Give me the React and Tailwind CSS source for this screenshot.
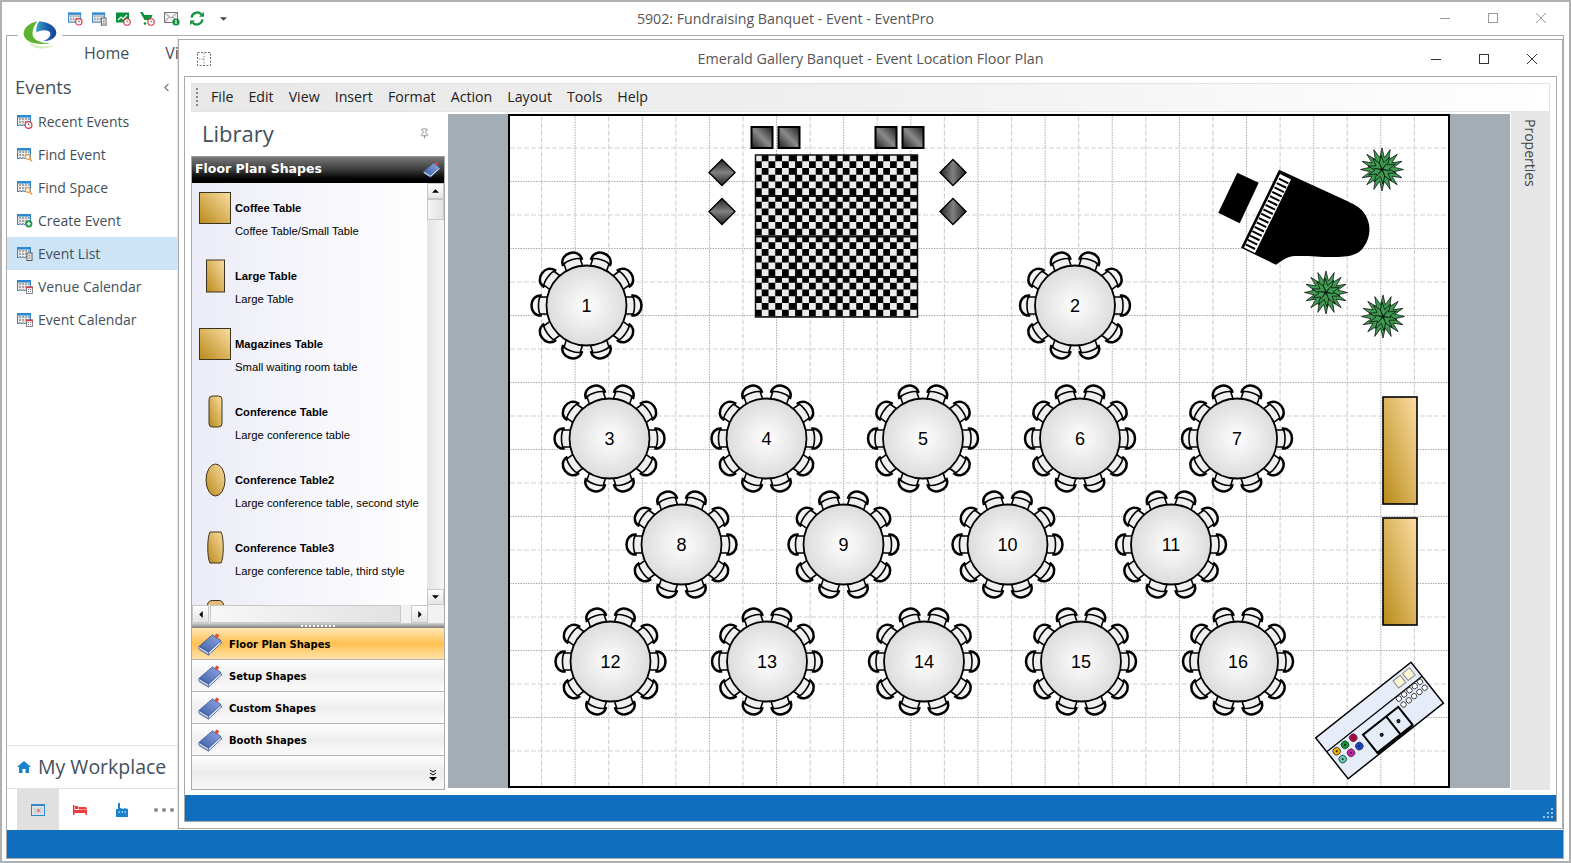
import { useId } from "react";
import { ChevronLeft, Pin } from "lucide-react";

const UI_FONT = "font-['Open_Sans',sans-serif]";

const SIDE_ITEMS = [
  { label: "Recent Events", badge: "clock" },
  { label: "Find Event", badge: "search" },
  { label: "Find Space", badge: "search" },
  { label: "Create Event", badge: "plus" },
  { label: "Event List", badge: "doc", active: true },
  { label: "Venue Calendar", badge: "cal" },
  { label: "Event Calendar", badge: "cal" },
];

const MENU = ["File", "Edit", "View", "Insert", "Format", "Action", "Layout", "Tools", "Help"];

const SHAPES = [
  { title: "Coffee Table", desc: "Coffee Table/Small Table", kind: "square" },
  { title: "Large Table", desc: "Large Table", kind: "tall" },
  { title: "Magazines Table", desc: "Small waiting room table", kind: "square" },
  { title: "Conference Table", desc: "Large conference table", kind: "round" },
  { title: "Conference Table2", desc: "Large conference table, second style", kind: "oval" },
  { title: "Conference Table3", desc: "Large conference table, third style", kind: "barrel" },
];

const GROUPS = ["Floor Plan Shapes", "Setup Shapes", "Custom Shapes", "Booth Shapes"];

const TABLES = [
  [1, 586.5, 305], [2, 1075, 305],
  [3, 609.5, 438], [4, 766.5, 438], [5, 923, 438], [6, 1080, 438], [7, 1237, 438],
  [8, 681.5, 544], [9, 843.5, 544], [10, 1007.5, 544], [11, 1171, 544],
  [12, 610.5, 661], [13, 767, 661], [14, 924, 661], [15, 1081, 661], [16, 1238, 661],
];

function CalendarIcon({ badge, className = "" }) {
  return (
    <svg viewBox="0 0 16 14" className={className}>
      <rect x="0.5" y="0.5" width="13" height="10" fill="#e8e8e8" stroke="#2b88d0" />
      <rect x="0.5" y="0.5" width="13" height="2" fill="#2b88d0" />
      {[3, 6, 9].map((y) =>
        [2, 5, 8, 11].map((x) => <rect key={`${x}-${y}`} x={x} y={y} width="2" height="2" fill="#a9a9a9" />)
      )}
      {badge === "clock" && (
        <g>
          <circle cx="11.5" cy="10" r="3.4" fill="#fff" stroke="#d9333f" strokeWidth="1.2" />
          <path d="M11.5 8.2V10H13" fill="none" stroke="#444" strokeWidth="0.7" />
        </g>
      )}
      {badge === "search" && (
        <g fill="none" stroke="#ee9a45" strokeWidth="1.2">
          <circle cx="10.8" cy="9" r="2.4" fill="#fff" />
          <path d="M12.6 10.8L15 13.4" strokeWidth="1.5" />
        </g>
      )}
      {badge === "plus" && (
        <g>
          <circle cx="11.8" cy="9.8" r="3.6" fill="#1f9447" />
          <path d="M11.8 7.8v4M9.8 9.8h4" stroke="#fff" strokeWidth="1.2" />
        </g>
      )}
      {badge === "doc" && (
        <g>
          <rect x="10" y="6" width="5" height="7.5" fill="#fff" stroke="#555" />
          <path d="M11.5 8.3h2M11.5 10h2M11.5 11.7h2" stroke="#555" strokeWidth="0.8" />
        </g>
      )}
      {badge === "cal" && (
        <g>
          <rect x="9.5" y="7" width="6" height="6.5" fill="#fff" stroke="#666" strokeWidth="0.8" />
          <rect x="9.2" y="6.6" width="6.6" height="1.6" fill="#e5353f" />
          <path d="M11 9.6h1M13.2 9.6h1M11 11.6h1M13.2 11.6h1" stroke="#777" />
        </g>
      )}
    </svg>
  );
}

function ToolbarIcons() {
  return (
    <div className="flex items-center gap-[9px]">
      <CalendarIcon badge="clock" className="w-[15px] h-[14px]" />
      <CalendarIcon badge="doc" className="w-[15px] h-[14px]" />
      <svg viewBox="0 0 15 14" className="w-[15px] h-[14px]">
        <rect x="0" y="0.5" width="13" height="10" fill="#0d8f3a" />
        <path d="M2 8l3-3 2 2 4-4" fill="none" stroke="#fff" strokeWidth="1.2" />
        <circle cx="11" cy="10" r="3.2" fill="#fff" stroke="#d9333f" strokeWidth="1.1" />
        <path d="M11 8.4V10h1.4" fill="none" stroke="#444" strokeWidth="0.6" />
      </svg>
      <svg viewBox="0 0 15 15" className="w-[15px] h-[15px]">
        <path d="M0 1h2.5l2 3h8l-2 5h-6z" fill="#0d8f3a" />
        <circle cx="5" cy="12.5" r="1.3" fill="#0d8f3a" />
        <circle cx="11" cy="11" r="3.2" fill="#fff" stroke="#d9333f" strokeWidth="1.1" />
        <path d="M11 9.4V11h1.4" fill="none" stroke="#444" strokeWidth="0.6" />
      </svg>
      <svg viewBox="0 0 16 15" className="w-[16px] h-[15px]">
        <rect x="0.5" y="1.5" width="13" height="10" fill="#f3f3f3" stroke="#777" />
        <path d="M0.5 1.5L7 7l6.5-5.5M0.5 11.5L5 6M13.5 11.5L9 6" fill="none" stroke="#777" strokeWidth="0.8" />
        <circle cx="12" cy="11" r="3.6" fill="#11913f" />
        <path d="M12 9v4" stroke="#fff" strokeWidth="1.2" />
      </svg>
      <svg viewBox="0 0 16 16" className="w-[16px] h-[15px]">
        <path d="M2.2 7A6 6 0 0 1 12.6 3.6" fill="none" stroke="#199144" strokeWidth="2.4" />
        <path d="M10.2 6.2L15.4 6V0.8z" fill="#199144" />
        <path d="M13.8 9A6 6 0 0 1 3.4 12.4" fill="none" stroke="#199144" strokeWidth="2.4" />
        <path d="M5.8 9.8L0.6 10v5.2z" fill="#199144" />
      </svg>
      <svg viewBox="0 0 8 4" className="w-[7px] h-[4px] ml-[6px]">
        <path d="M0 0h8L4 4z" fill="#444" />
      </svg>
    </div>
  );
}

function Logo() {
  const id = useId();
  return (
    <svg viewBox="70 60 100 90" className="absolute left-[21px] top-[18px] w-[34px] h-[31px]">
      <defs>
        <linearGradient id={id} x1="0" y1="0" x2="1" y2="0">
          <stop offset="0" stopColor="#3fa0c8" />
          <stop offset="0.55" stopColor="#1b5fae" />
          <stop offset="1" stopColor="#17468f" />
        </linearGradient>
      </defs>
      <path d="M85 124C100 146 135 149 162 134C130 141 105 136 85 124Z" fill="#d5ecbc" />
      <path d="M112 63C85 69 72 84 72 100C72 119 97 136 152 128C120 128 98 118 98 100C98 85 106 72 112 63Z" fill="#5db230" />
      <path d="M118 63C145 65 168 79 168 97C168 112 150 122 126 122C144 118 152 108 150 97C147 87 124 87 109 96C108 80 112 70 118 63Z" fill={`url(#${id})`} />
    </svg>
  );
}

function BookIcon({ className = "" }) {
  const id = useId();
  return (
    <svg viewBox="0 0 26 25" className={className}>
      <defs>
        <linearGradient id={id} x1="0" y1="1" x2="1" y2="0">
          <stop offset="0" stopColor="#3e5ea8" />
          <stop offset="1" stopColor="#8ea8e0" />
        </linearGradient>
      </defs>
      <path d="M1 18L15 6l10 5-14 13z" fill="#e6ecf8" stroke="#2d4a8c" strokeWidth="0.8" />
      <path d="M1 15L15 3l9 6-13 12z" fill={`url(#${id})`} stroke="#2d4a8c" strokeWidth="0.8" />
      <path d="M1 15c-1 2 0 3 1 3.4l9 5.4v-2.8z" fill="#c9d5ef" stroke="#2d4a8c" strokeWidth="0.7" />
      <path d="M17 5l2-3.5 3 1.5-2 4z" fill="#e34a3b" />
    </svg>
  );
}

function ArrowButton({ dir, className = "" }) {
  const d = { up: "M0 4L4 0l4 4z", down: "M0 0h8L4 4z", left: "M4 0v8L0 4z", right: "M0 0v8l4-4z" }[dir];
  const box = dir === "up" || dir === "down" ? "0 0 8 4" : "0 0 4 8";
  return (
    <div className={`flex items-center justify-center bg-gradient-to-b from-white to-[#e4e4e4] border border-[#c8c8c8] ${className}`}>
      <svg viewBox={box} className={dir === "up" || dir === "down" ? "w-[7px] h-[4px]" : "w-[4px] h-[7px]"}>
        <path d={d} fill="#000" />
      </svg>
    </div>
  );
}

function ShapeThumb({ kind }) {
  const id = useId();
  const fill = `url(#${id})`;
  const props = { fill, stroke: "#3d3420", strokeWidth: 1 };
  return (
    <svg viewBox="0 0 34 34" className="w-[34px] h-[34px] shrink-0">
      <defs>
        <linearGradient id={id} x1="0" y1="1" x2="1" y2="0">
          <stop offset="0" stopColor="#b98a18" />
          <stop offset="1" stopColor="#fbdda4" />
        </linearGradient>
      </defs>
      {kind === "square" && <rect x="1.5" y="1.5" width="31" height="31" {...props} />}
      {kind === "tall" && <rect x="8.5" y="1" width="18" height="32" {...props} />}
      {kind === "round" && <rect x="11" y="1" width="13" height="31" rx="3.5" {...props} />}
      {kind === "oval" && <ellipse cx="17.5" cy="17" rx="9.5" ry="16" {...props} />}
      {kind === "barrel" && <path d="M12 1h11c3 5 3 26 0 31H12C9 27 9 6 12 1z" {...props} />}
    </svg>
  );
}

function LibraryPanel() {
  return (
    <div className="w-[254px] shrink-0 flex flex-col bg-white">
      <div className="h-[44px] flex items-center justify-between pl-[11px] pr-[15px] pb-[2px]">
        <span className={`${UI_FONT} text-[22px] text-[#44505c]`}>Library</span>
        <Pin className="w-[11px] h-[11px] text-[#666]" strokeWidth={1.5} />
      </div>
      <div className="flex-1 flex flex-col border-x border-[#aaa] min-h-0">
        <div className="h-[27px] shrink-0 flex items-center justify-between pl-[3px] pr-[3px] pb-[2px] bg-gradient-to-b from-[#7a7a7a] via-[#3a3a3a] to-black border-t border-[#999]">
          <span className="font-['DejaVu_Sans',sans-serif] font-bold text-[12.5px] text-white">Floor Plan Shapes</span>
          <BookIcon className="w-[18px] h-[17px]" />
        </div>
        <div className="h-[422px] shrink-0 flex">
          <div className="flex-1 min-w-0 overflow-hidden bg-gradient-to-r from-[#ececf7] to-white">
            {SHAPES.map((s) => (
              <div key={s.title} className="h-[68px] flex items-start pt-[8px] pl-[6px]">
                <ShapeThumb kind={s.kind} />
                <div className="ml-[3px] pt-[10px] font-['Liberation_Sans',sans-serif] text-black">
                  <div className="font-bold text-[11.2px] leading-[14px]">{s.title}</div>
                  <div className="text-[11.25px] leading-[14px] mt-[9px] whitespace-nowrap">{s.desc}</div>
                </div>
              </div>
            ))}
            <div className="pl-[15px] mt-[9px]">
              <div className="w-[17px] h-[6px] bg-[#e3bd78] border border-[#3d3420] rounded-t-[5px]" />
            </div>
          </div>
          <div className="w-[17px] shrink-0 flex flex-col bg-gradient-to-r from-[#e4e4e4] to-[#f6f6f6]">
            <ArrowButton dir="up" className="h-[16px]" />
            <div className="h-[21px] bg-gradient-to-r from-[#f4f4f4] to-[#e2e2e2] border border-[#c8c8c8]" />
            <div className="flex-1" />
            <ArrowButton dir="down" className="h-[16px]" />
          </div>
        </div>
        <div className="h-[18px] shrink-0 flex bg-[#f2f2f2]">
          <ArrowButton dir="left" className="w-[17px]" />
          <div className="w-[191px] bg-gradient-to-r from-[#f7f7f7] to-[#e2e2e2] border border-[#c8c8c8] ml-[1px]" />
          <div className="w-[10px]" />
          <ArrowButton dir="right" className="w-[17px]" />
        </div>
        <div className="h-[5px] shrink-0 flex items-center justify-center bg-gradient-to-b from-[#d4d4d4] to-[#7e7e7e]">
          <div className="w-[34px] border-t-2 border-dotted border-[#f4f4f4]" />
        </div>
        {GROUPS.map((g, i) => (
          <div
            key={g}
            className={`h-[32px] shrink-0 flex items-center pl-[6px] pt-[1px] border-b border-[#b4b4b4] ${
              i === 0
                ? "bg-gradient-to-b from-[#ffe7b0] via-[#ffc04f] to-[#ffe2a6]"
                : "bg-gradient-to-b from-white via-[#efefef] to-[#fafafa]"
            }`}
          >
            <BookIcon className="w-[25px] h-[24px]" />
            <span className="ml-[6px] font-['DejaVu_Sans',sans-serif] font-bold text-[10px] text-black">{g}</span>
          </div>
        ))}
        <div className="flex-1 flex items-end justify-end pr-[7px] pb-[8px] bg-gradient-to-b from-white via-[#ececec] to-[#f8f8f8] border-b border-[#aaa]">
          <svg viewBox="0 0 8 11" className="w-[8px] h-[11px]">
            <path d="M1 0l3 2 3-2M1 3l3 2 3-2" fill="none" stroke="#000" />
            <path d="M0 7h8l-4 4z" fill="#000" />
          </svg>
        </div>
      </div>
    </div>
  );
}

function Plant({ x, y }) {
  const star = (spikes, outer, inner, rot) =>
    Array.from({ length: spikes * 2 }, (_, i) => {
      const r = i % 2 ? inner : outer;
      const a = ((i * 180) / spikes + rot) * (Math.PI / 180);
      return `${(r * Math.cos(a)).toFixed(1)},${(r * Math.sin(a)).toFixed(1)}`;
    }).join(" ");
  return (
    <g transform={`translate(${x} ${y})`} stroke="#000" strokeWidth="0.7">
      <polygon points={star(16, 21.5, 12, 0)} fill="#3f9a52" />
      <polygon points={star(10, 14.5, 7, 14)} fill="#3f9a52" />
      <polygon points={star(6, 8, 0.8, 8)} fill="#111" strokeWidth="0.4" />
    </g>
  );
}

function RoundTable({ n, x, y }) {
  return (
    <g transform={`translate(${x} ${y})`}>
      {Array.from({ length: 10 }, (_, i) => (
        <g key={i} transform={`rotate(${i * 36})`}>
          <path d="M46 -10C51.5 -10 55 -5.5 55 0C55 5.5 51.5 10 46 10Z" fill="#f4f4f4" stroke="#000" strokeWidth="2.5" />
          <path d="M35 -8.5H46.5C48.5 -5 48.5 5 46.5 8.5H35Z" fill="#efefef" stroke="#000" strokeWidth="1.6" />
        </g>
      ))}
      <circle r="40" fill="url(#tableTop)" stroke="#000" strokeWidth="1.8" />
      <text y="6.5" textAnchor="middle" fontFamily="'Liberation Sans', sans-serif" fontSize="18" fill="#000">
        {n}
      </text>
    </g>
  );
}

function Piano() {
  const keys = Array.from({ length: 16 }, (_, i) => {
    const t = (i + 0.5) / 16;
    const x = 1280 + (1244.5 - 1280) * t;
    const y = 176 + (246 - 176) * t;
    return <line key={i} x1={x} y1={y} x2={x + 9.5} y2={y + 4.7} stroke="#000" strokeWidth="2" />;
  });
  return (
    <g>
      <polygon points="1237.3,172.3 1258.7,182.3 1239.7,222.7 1218.3,212.3" fill="#000" />
      <path
        d="M1279 169.3L1241 247.3L1276 264.3C1282 260 1287 256 1295 255.5C1308 255 1318 256.5 1332 256.5C1345 256.5 1358 256 1364 246C1371 236 1372 222 1363 211C1358 205 1352 203 1346 200Z"
        fill="#000"
      />
      <polygon points="1280,173.5 1291,179 1255,252.5 1244,247" fill="#fff" />
      {keys}
    </g>
  );
}

function Kitchen() {
  const dots = [
    [29.5, 23.3, "#c00050"], [18.6, 23.7, "#0e9a2d"], [8.1, 23.5, "#f0b000"],
    [29, 33.6, "#1447d6"], [18.4, 33.7, "#d01fb0"], [7.9, 33.5, "#5fd0b0"],
  ];
  return (
    <g transform="translate(1315.7 737.3) rotate(-38.4)" stroke="#000" fill="none">
      <rect width="121.6" height="52.2" fill="#e6edf8" strokeWidth="1.5" />
      <line x1="0" y1="17.8" x2="121.6" y2="17.8" strokeWidth="1.2" />
      <rect x="96" y="3.5" width="9" height="9" fill="#fff8d8" stroke="#888" />
      <rect x="108" y="3.5" width="9" height="9" fill="#fff8d8" stroke="#888" />
      {[21, 28.5].map((v) =>
        [89.5, 96.25, 103, 109.75, 116.5].map((u) => <circle key={`${u}-${v}`} cx={u} cy={v} r="2.7" fill="#fff" strokeWidth="0.7" />)
      )}
      <rect x="39" y="27" width="45" height="23" fill="#e6edf8" strokeWidth="2" />
      <line x1="68.5" y1="27" x2="68.5" y2="50" strokeWidth="2" />
      <line x1="39" y1="51.2" x2="84" y2="51.2" strokeWidth="1" />
      <circle cx="53.6" cy="38.6" r="1.5" fill="#333" />
      <circle cx="75.2" cy="38.3" r="1.5" fill="#333" />
      {dots.map(([u, v, c]) => (
        <g key={c}>
          <circle cx={u} cy={v} r="3.8" fill={c} stroke="#333" strokeWidth="0.8" />
          <circle cx={u} cy={v} r="1" fill="#222" stroke="none" />
        </g>
      ))}
    </g>
  );
}

function FloorPlan() {
  const vLines = Array.from({ length: 27 }, (_, i) => i + 1);
  const hLines = Array.from({ length: 19 }, (_, i) => i + 1);
  const line = (odd) =>
    odd
      ? { stroke: "#d2d2d2", strokeWidth: 1.2, strokeDasharray: "5 2" }
      : { stroke: "#a8a8a8", strokeWidth: 1, strokeDasharray: "1.4 1.2" };
  return (
    <svg viewBox="510 116 938 669" className="block w-full h-full">
      <defs>
        <radialGradient id="tableTop">
          <stop offset="0" stopColor="#fefefe" />
          <stop offset="1" stopColor="#dcdcdc" />
        </radialGradient>
        <linearGradient id="wood" x1="0" y1="1" x2="1" y2="0">
          <stop offset="0" stopColor="#b98a18" />
          <stop offset="1" stopColor="#fbdda4" />
        </linearGradient>
        <linearGradient id="steel" x1="0" y1="1" x2="1" y2="0">
          <stop offset="0" stopColor="#1c1c1c" />
          <stop offset="0.5" stopColor="#8a8a8a" />
          <stop offset="1" stopColor="#1c1c1c" />
        </linearGradient>
        <linearGradient id="steelFlat" x1="0" y1="0" x2="0" y2="1">
          <stop offset="0" stopColor="#222" />
          <stop offset="0.5" stopColor="#808080" />
          <stop offset="1" stopColor="#222" />
        </linearGradient>
        <linearGradient id="steelSide" x1="0" y1="0" x2="1" y2="0">
          <stop offset="0" stopColor="#222" />
          <stop offset="0.5" stopColor="#808080" />
          <stop offset="1" stopColor="#222" />
        </linearGradient>
        <pattern id="checker" x="755" y="154" width="13.5" height="13.5" patternUnits="userSpaceOnUse">
          <rect width="13.5" height="13.5" fill="#ececec" />
          <rect x="6.75" width="6.75" height="6.75" fill="#000" />
          <rect y="6.75" width="6.75" height="6.75" fill="#000" />
        </pattern>
      </defs>

      {vLines.map((k) => {
        const x = 508 + k * 33.57;
        return <line key={k} x1={x} y1="116" x2={x} y2="785" {...line(k % 2 === 1)} />;
      })}
      {hLines.map((k) => {
        const y = 114 + k * 33.5;
        return <line key={k} x1="510" y1={y} x2="1448" y2={y} {...line(k % 2 === 1)} />;
      })}

      {/* stage: dance floor with speakers */}
      <rect x="755.5" y="154.5" width="162" height="162" fill="url(#checker)" stroke="#111" strokeWidth="1.5" />
      {[796, 836.5, 877].map((p) => (
        <g key={p} stroke="#111" strokeWidth="2">
          <line x1={p} y1="154" x2={p} y2="316" />
          <line x1="755" y1={p - 600.5} x2="917" y2={p - 600.5} />
        </g>
      ))}
      {[751, 778, 875, 902].map((x) => (
        <rect key={x} x={x + 0.5} y="126.5" width="21" height="21" fill="url(#steel)" stroke="#000" strokeWidth="2" />
      ))}
      {[[722, 172, "steelFlat"], [722, 211, "steelFlat"], [953, 172, "steelSide"], [953, 211, "steelSide"]].map(([x, y, g]) => (
        <polygon
          key={`${x}-${y}`}
          points={`${x},${y - 13} ${x + 13},${y} ${x},${y + 13} ${x - 13},${y}`}
          fill={`url(#${g})`}
          stroke="#000"
          strokeWidth="1.4"
        />
      ))}

      <Piano />
      <Plant x={1382} y={169} />
      <Plant x={1326} y={292} />
      <Plant x={1383} y={316} />

      {TABLES.map(([n, x, y]) => (
        <RoundTable key={n} n={n} x={x} y={y} />
      ))}

      <rect x="1383" y="396.5" width="34" height="107" fill="url(#wood)" stroke="#000" strokeWidth="1.6" />
      <rect x="1383" y="517.5" width="34" height="107" fill="url(#wood)" stroke="#000" strokeWidth="1.6" />
      <Kitchen />
    </svg>
  );
}

function WindowControls({ gray }) {
  const color = gray ? "#9a9a9a" : "#333";
  return (
    <div className="flex items-center gap-[38px]">
      <svg viewBox="0 0 10 10" className="w-[10px] h-[10px]">
        <path d="M0 5.5h10" stroke={color} />
      </svg>
      <svg viewBox="0 0 10 10" className="w-[10px] h-[10px]">
        <rect x="0.5" y="0.5" width="9" height="9" fill="none" stroke={color} />
      </svg>
      <svg viewBox="0 0 10 10" className="w-[10px] h-[10px]">
        <path d="M0 0l10 10M10 0L0 10" stroke={color} />
      </svg>
    </div>
  );
}

function SizeGrip() {
  return (
    <svg viewBox="0 0 10 10" className="w-[10px] h-[10px]">
      {[[8, 0], [8, 4], [8, 8], [4, 4], [4, 8], [0, 8]].map(([x, y]) => (
        <rect key={`${x}-${y}`} x={x} y={y} width="2" height="2" fill="#9cc4e8" />
      ))}
    </svg>
  );
}

function FloorPlanWindow() {
  return (
    <div className="absolute left-[176px] top-[37px] w-[1385px] h-[790px] flex flex-col bg-white border border-[#aaa] p-[1px]">
      <div className="relative h-[35px] shrink-0 flex items-center justify-center">
        <svg viewBox="0 0 14 14" className="absolute left-[17px] top-[11px] w-[14px] h-[14px]">
          <rect x="0.5" y="0.5" width="13" height="13" fill="none" stroke="#666" strokeDasharray="2 1.5" />
          <path d="M7 1v12M2 7h5" stroke="#888" strokeDasharray="1.5 1.5" />
        </svg>
        <span className={`${UI_FONT} text-[14.3px] text-[#555]`}>Emerald Gallery Banquet - Event Location Floor Plan</span>
        <div className="absolute right-[24px] top-[13px]">
          <WindowControls />
        </div>
      </div>
      <div className="flex-1 flex flex-col mx-[4px] mb-[5px] border border-[#aaa] min-h-0">
        <div className="flex-1 flex flex-col min-h-0 px-[6px] pt-[6px] pb-[5px]">
          <div className="h-[29px] shrink-0 flex items-center bg-gradient-to-r from-[#e8e8e8] via-[#f0f0f0] to-white border border-[#e4e4e4] pl-[4px] pb-[2px]">
            <div className="h-[18px] border-l-2 border-dotted border-[#888]" />
            <div className={`${UI_FONT} flex gap-[15px] ml-[13px] text-[14.2px] text-[#222]`}>
              {MENU.map((m) => (
                <span key={m}>{m}</span>
              ))}
            </div>
          </div>
          <div className="flex-1 flex min-h-0">
            <LibraryPanel />
            <div className="flex-1 flex justify-center bg-[#a4adb3] border-l-[3px] border-white border-t-[2px] border-b-[2px]">
              <div className="w-[942px] border-2 border-black bg-white">
                <FloorPlan />
              </div>
            </div>
            <div className="w-[39px] shrink-0 ml-[1px] flex justify-center pt-[7px] bg-[#e6e6e6]">
              <span className={`${UI_FONT} text-[14px] text-[#444] [writing-mode:vertical-rl]`}>Properties</span>
            </div>
          </div>
        </div>
        <div className="h-[26px] shrink-0 flex items-end justify-end bg-[#0f6ebe] p-[3px]">
          <SizeGrip />
        </div>
      </div>
    </div>
  );
}

function Sidebar() {
  return (
    <div className="w-[171px] shrink-0 flex flex-col overflow-hidden border-r border-[#e2e2e2]">
      <div className="h-[33px] shrink-0" />
      <div className="h-[36px] shrink-0 flex items-center justify-between pl-[8px] pr-[4px]">
        <span className={`${UI_FONT} text-[18.5px] text-[#44505c]`}>Events</span>
        <ChevronLeft className="w-[13px] h-[13px] text-[#777]" />
      </div>
      {SIDE_ITEMS.map((it) => (
        <div key={it.label} className={`h-[33px] shrink-0 flex items-center pl-[10px] ${it.active ? "bg-[#cde4f7]" : ""}`}>
          <CalendarIcon badge={it.badge} className="w-[16px] h-[14px]" />
          <span className={`${UI_FONT} ml-[5px] text-[14px] text-[#444f5a]`}>{it.label}</span>
        </div>
      ))}
      <div className="flex-1" />
      <div className="h-[44px] shrink-0 flex items-center pl-[10px] border-t border-b border-[#e2e2e2]">
        <svg viewBox="0 0 14 12" className="w-[14px] h-[12px]">
          <path d="M7 0L0 6h2v6h3.5V8h3v4H12V6h2z" fill="#1b83cc" />
        </svg>
        <span className={`${UI_FONT} ml-[7px] text-[19.5px] text-[#44505c]`}>My Workplace</span>
      </div>
      <div className="h-[41px] shrink-0 flex items-center pl-[10px]">
        <div className="w-[42px] shrink-0 h-full flex items-center justify-center bg-[#e0e0e0]">
          <svg viewBox="0 0 14 12" className="w-[14px] h-[12px]">
            <rect x="0.5" y="0.5" width="13" height="11" fill="#e4e4e4" stroke="#2b88d0" />
            <path d="M1 1.5h12" stroke="#2b88d0" />
            <path d="M4 3v7M7 3v7M10 3v7M2 5h10M2 8h10" stroke="#c8c8c8" />
            <rect x="6.5" y="5.5" width="2" height="2" fill="#e5353f" />
          </svg>
        </div>
        <div className="w-[42px] shrink-0 flex justify-center">
          <svg viewBox="0 0 14 10" className="w-[14px] h-[10px]">
            <path d="M0 0h1.5v5H14v5h-1.5V8h-11v2H0z" fill="#ef3b3b" />
            <path d="M2 1h3v3H2zM5.5 2H12a2 2 0 0 1 2 2v.5H5.5z" fill="#ef3b3b" />
          </svg>
        </div>
        <div className="w-[42px] shrink-0 flex justify-center">
          <svg viewBox="0 0 12 14" className="w-[12px] h-[14px]">
            <path d="M2 0h2v5l4 1V5l4 1v8H0V6h2z" fill="#1b83cc" />
            <path d="M2.5 9h1.5M5.5 9H7M8.5 9H10" stroke="#fff" />
          </svg>
        </div>
        <div className="w-[42px] shrink-0 flex justify-center gap-[4px]">
          {[0, 1, 2].map((d) => (
            <div key={d} className="w-[4px] h-[4px] rounded-full bg-[#888]" />
          ))}
        </div>
      </div>
    </div>
  );
}

export default function App() {
  return (
    <div className="relative w-[1571px] h-[863px] overflow-hidden bg-white border-2 border-[#b0b0b0]">
      <div className="relative h-[33px] flex items-center justify-center">
        <div className="absolute left-[66px] top-[9px]">
          <ToolbarIcons />
        </div>
        <span className={`${UI_FONT} text-[14.2px] text-[#555]`}>5902: Fundraising Banquet - Event - EventPro</span>
        <div className="absolute right-[23px] top-[11px]">
          <WindowControls gray />
        </div>
      </div>
      <div className="ml-[4px] mr-[5px] mb-[4px] h-[824px] flex flex-col border border-[#aaa]">
        <div className="flex-1 flex min-h-0">
          <Sidebar />
          <div className={`${UI_FONT} flex-1 pt-[5px] text-[16px] text-[#44505c]`}>
            <span className="relative left-[-94px]">Home</span>
            <span className="relative left-[-58px]">View</span>
          </div>
        </div>
        <div className="h-[28px] shrink-0 bg-[#0f6ebe]" />
      </div>
      <div className="absolute left-[16px] top-[15px] w-[44px] h-[36px] bg-white" />
      <Logo />
      <FloorPlanWindow />
    </div>
  );
}
